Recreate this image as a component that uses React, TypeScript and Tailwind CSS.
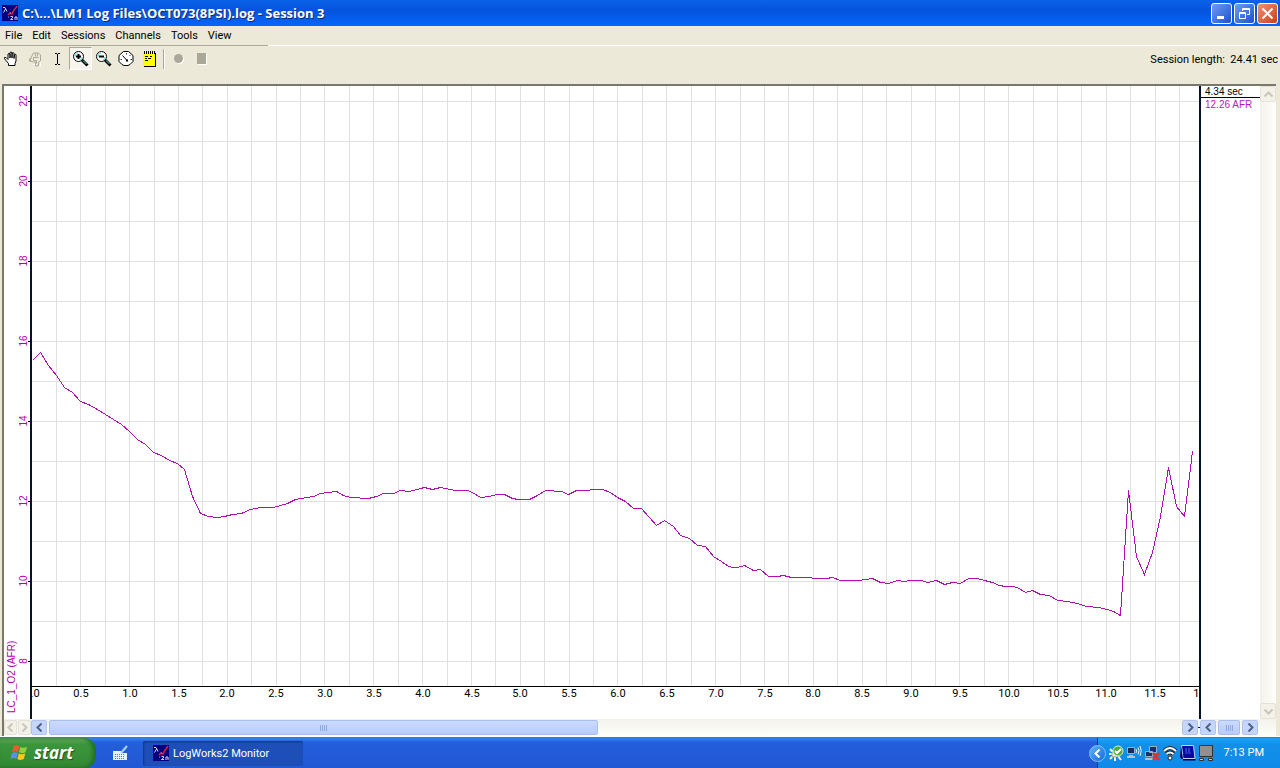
import type { ReactNode } from 'react'

const menus = ['File', 'Edit', 'Sessions', 'Channels', 'Tools', 'View']

const GRID_X = 24.42
const GRID_Y = 40

// x, y pairs of the AFR trace
const trace = [
    [32, 360], [40, 352], [48, 365], [56, 375], [64, 387], [72, 392], [80, 401], [88, 404], [97, 409], [105, 414],
    [113, 419], [121, 424], [129, 431], [137, 439], [145, 444], [153, 452], [161, 455], [169, 460], [177, 463], [184, 469],
    [192, 496], [200, 513], [208, 516], [217, 517], [224, 516], [232, 514], [241, 513], [250, 509], [260, 507], [273, 507],
    [287, 503], [295, 499], [300, 498], [313, 496], [320, 493], [336, 491], [343, 495], [350, 497], [368, 498], [376, 496],
    [383, 493], [393, 493], [400, 490], [409, 491], [424, 487], [432, 489], [440, 487], [455, 490], [467, 490], [472, 492],
    [480, 497], [489, 496], [496, 494], [504, 494], [512, 498], [518, 499], [529, 499], [537, 495], [545, 490], [561, 491],
    [568, 494], [576, 490], [587, 490], [592, 489], [602, 489], [610, 492], [617, 497], [625, 501], [633, 508], [641, 508],
    [649, 517], [656, 525], [664, 520], [673, 526], [680, 535], [689, 538], [697, 545], [705, 546], [713, 556], [721, 561],
    [728, 566], [733, 567], [737, 567], [744, 565], [753, 570], [760, 569], [768, 576], [777, 576], [783, 575], [791, 577],
    [810, 577], [813, 578], [826, 578], [832, 577], [840, 580], [858, 580], [872, 578], [880, 582], [888, 583], [897, 580],
    [904, 581], [910, 580], [921, 580], [927, 582], [936, 580], [944, 584], [952, 582], [960, 583], [968, 578], [977, 578],
    [984, 580], [992, 582], [999, 585], [1005, 586], [1012, 586], [1017, 587], [1025, 592], [1032, 590], [1040, 594], [1049, 595],
    [1057, 600], [1067, 601], [1077, 603], [1086, 606], [1098, 607], [1107, 609], [1113, 611], [1120, 615], [1128, 490], [1136, 556],
    [1144, 574], [1152, 552], [1160, 516], [1168, 467], [1176, 506], [1184, 516], [1192, 451],
]

const verticals = Array.from({ length: 48 }, (_, i) => Math.floor(31.9 + GRID_X * (i + 1)))
const horizontals = Array.from({ length: 15 }, (_, i) => 101 + GRID_Y * i)
const times = Array.from({ length: 25 }, (_, i) => ({ x: Math.round(32 + GRID_X * 2 * i), label: (i / 2).toFixed(1) }))
const ratios = [22, 20, 18, 16, 14, 12, 10, 8].map((v, i) => ({ v, y: 101 + 80 * i }))

function AppIcon() {
    return (
        <svg width="16" height="16" viewBox="0 0 16 16" fill="none" aria-hidden="true">
            <path fill="#000080" d="M0 0h16v16H0z" />
            <path stroke="#d8d8f0" d="M1 2.500h2l2 4M3.500 4 1.500 7.500M8.500 11.500h2v1.500l-2 1.500h2.500M13 15v-3h2v3" />
            <path stroke="#e8202a" strokeWidth="1.500" d="m6 10 2-2 2 1 2-4 1-1 2-3" />
            <path stroke="#7fb0e8" d="M6 12h1M8 8h1" />
        </svg>
    )
}

function Hand({ faded = false }: { faded?: boolean }) {
    return (
        <svg width="16" height="16" viewBox="0 0 16 16" fill={faded ? 'none' : '#fff'} stroke={faded ? '#aca899' : '#000'} aria-hidden="true">
            {faded ? (
                <>
                    <path stroke="#fff" d="M6.500 13.500h3M13.500 11v4h-3" />
                    <path d="M3.500 10.500V7.500l3-5.500h5l2 2v6l-2 1v4h-3v-4h-2l-4-1v-2l2-1M6.500 9.500v-3h5M8.500 2.500v3M10.500 2.500v3M6.500 9.500h3v3" />
                </>
            ) : (
                <path strokeLinejoin="round" d="M4.500 14.500v-2l-3-3.500-1-1.500v-1h1.500l2 2v-5.500l1-.5 1 .5v4-5.500l1-.5 1 .5V7l.2-5 1-.3.800.5V7.500l.5-4 1-.3.500.8v6l-1 2.500v2z" />
            )}
        </svg>
    )
}

function Magnifier({ plus = false }: { plus?: boolean }) {
    return (
        <svg width="17" height="17" viewBox="0 0 17 17" fill="none" aria-hidden="true">
            <circle cx="6.500" cy="6.500" r="5" fill="#fff" stroke="#000" />
            <path stroke="#4ee0e0" d="M3 7a4 4 0 0 1 3-4M10 7a4 4 0 0 1-2 3" />
            <path stroke="#000" strokeWidth="2" d={plus ? 'M4 6.500h5M6.500 4v5' : 'M4 6.500h5'} />
            <path stroke="#000" strokeWidth="3" d="m10 10 5.500 5.500" />
            <path stroke="#4ee0e0" d="m11 10.500 3.500 3.500" />
        </svg>
    )
}

function Gauge() {
    return (
        <svg width="17" height="16" viewBox="0 0 17 16" fill="none" stroke="#000" aria-hidden="true">
            <path fill="#fff" d="M5.500.5h5l4.500 4v6l-3 3-2 1h-4l-2-1-3-3v-6z" />
            <path d="M4.500 4.500 9 9.500" />
            <path strokeWidth=".8" d="M8.500 2v1.500M12.500 4l-1 1M14 8.500h-1.500M2.500 8.500H4" />
            <path fill="#000" stroke="none" d="M8 8.500h2v2H8z" />
        </svg>
    )
}

function Notepad() {
    return (
        <svg width="14" height="16" viewBox="0 0 14 16" aria-hidden="true">
            <path fill="#000" d="M1 2h12v14H1z" />
            <path fill="#ffff00" d="M0 2h12v13H0z" />
            <path fill="none" stroke="#000" strokeDasharray="1 1" strokeWidth="3" d="M1 1.500h11" />
            <path fill="none" stroke="#000" d="M2 5.500h3M7 5.500h2M2 7.500h2M5 7.500h3M2 9.500h3" />
        </svg>
    )
}

function ToolButton({ label, pressed = false, disabled = false, children }: { label: string; pressed?: boolean; disabled?: boolean; children: ReactNode }) {
    return (
        <button
            aria-label={label}
            aria-pressed={pressed}
            disabled={disabled}
            className={
                pressed
                    ? 'flex h-[23px] w-[23px] items-center justify-center border border-t-[#aca899] border-l-[#aca899] border-r-white border-b-white bg-[#f6f4ec]'
                    : 'flex h-[23px] w-[23px] items-center justify-center'
            }
        >
            {children}
        </button>
    )
}

function Chevron({ d }: { d: string }) {
    return (
        <svg width="9" height="9" viewBox="0 0 9 9" fill="none" stroke="currentColor" strokeWidth="2" aria-hidden="true">
            <path d={d} />
        </svg>
    )
}

const LEFT = 'M6.500 0.500l-4 4 4 4'
const RIGHT = 'M2.500 0.500l4 4-4 4'
const UP = 'M0.500 6.500l4-4 4 4'
const DOWN = 'M0.500 2.500l4 4 4-4'

function ScrollButton({ label, d, className }: { label: string; d: string; className: string }) {
    return (
        <button aria-label={label} className={`flex shrink-0 items-center justify-center rounded-xs border ${className}`}>
            <Chevron d={d} />
        </button>
    )
}

const blue = 'h-[15px] w-4 border-[#b0c4f0] bg-[#c6d5fd] text-[#4d6185]'
const dim = 'border-[#e4e2d6] bg-[#f3f1e8] text-[#c9c7ba]'

function Grip() {
    return (
        <span className="flex gap-px">
            <span className="h-[6px] w-px bg-[#8ea8e0]" />
            <span className="h-[6px] w-px bg-[#8ea8e0]" />
            <span className="h-[6px] w-px bg-[#8ea8e0]" />
            <span className="h-[6px] w-px bg-[#8ea8e0]" />
        </span>
    )
}

function TitleBar() {
    const frame = 'flex h-[21px] w-[21px] items-center justify-center rounded-[3px] border border-white'
    return (
        <header className="flex h-[26px] shrink-0 items-center bg-linear-to-b from-[#0a63e8] via-[#0553dd] via-40% to-[#0466fb] pr-[2px] pl-[2px]">
            <AppIcon />
            <h1 className="ml-1 flex-1 truncate font-['Open_Sans','Noto_Sans',sans-serif] text-[13px] leading-[20px] font-bold text-white [text-shadow:1px_1px_#0a2a80]">
                C:\...\LM1 Log Files\OCT073(8PSI).log - Session 3
            </h1>
            <div className="flex gap-[2px]">
                <button aria-label="Minimize" className={`${frame} bg-linear-to-br from-[#6f9cf5] to-[#1c4fd0]`}>
                    <svg width="13" height="13" fill="#fff" aria-hidden="true"><path d="M2 9h7v3H2z" /></svg>
                </button>
                <button aria-label="Restore" className={`${frame} bg-linear-to-br from-[#6f9cf5] to-[#1c4fd0]`}>
                    <svg width="13" height="13" fill="none" stroke="#fff" aria-hidden="true">
                        <path d="M4.500 4V1.500h7v6H9M4 2.500h8M1.500 5.500h6v6h-6zM1 6.500h7" />
                    </svg>
                </button>
                <button aria-label="Close" className={`${frame} bg-linear-to-br from-[#f09070] to-[#cc3a14]`}>
                    <svg width="13" height="13" stroke="#fff" strokeWidth="2" aria-hidden="true"><path d="m1.500 1.500 10 10M11.500 1.500l-10 10" /></svg>
                </button>
            </div>
        </header>
    )
}

function Toolbar() {
    return (
        <div className="flex h-[38px] shrink-0 items-start justify-between pt-px">
            <div className="flex items-center">
                <ToolButton label="Pan"><Hand /></ToolButton>
                <ToolButton label="Grab" disabled><Hand faded /></ToolButton>
                <ToolButton label="Select">
                    <svg width="7" height="12" fill="none" stroke="#000" aria-hidden="true"><path d="M1 .5h2M4 .5h2M3.500 1v10M1 11.500h2M4 11.500h2" /></svg>
                </ToolButton>
                <ToolButton label="Zoom in" pressed><Magnifier plus /></ToolButton>
                <ToolButton label="Zoom out"><Magnifier /></ToolButton>
                <ToolButton label="Gauges"><Gauge /></ToolButton>
                <ToolButton label="Notes"><Notepad /></ToolButton>
                <span className="mx-[2px] h-5 w-[2px] border-l border-l-[#aca899] bg-white" />
                <ToolButton label="Record" disabled>
                    <svg width="10" height="10" aria-hidden="true"><circle cx="5.500" cy="5.500" r="4.500" fill="#fff" /><circle cx="4.500" cy="4.500" r="4.500" fill="#aca899" /></svg>
                </ToolButton>
                <ToolButton label="Stop" disabled>
                    <svg width="10" height="12" aria-hidden="true"><path fill="#fff" d="M1 1h9v11H1z" /><path fill="#aca899" d="M0 0h9v11H0z" /></svg>
                </ToolButton>
            </div>
            <p className="pt-[5px] pr-[2px] font-[Roboto,sans-serif] text-[11px] leading-4 whitespace-pre">Session length:  24.41 sec</p>
        </div>
    )
}

function RatioAxis() {
    return (
        <svg className="h-full w-[26px] shrink-0 text-[10px]" fill="#b000b0" role="img" aria-label="LC_1_O2 (AFR) axis">
            <g transform="translate(-4 -86)">
                {ratios.map(({ v, y }) => (
                    <g key={v}>
                        <text textAnchor="middle" transform={`translate(27 ${y}) rotate(-90)`}>{v}</text>
                        <path fill="#000" d={`M28 ${y}h2v1h-2z`} />
                    </g>
                ))}
                <text transform="translate(15 713) rotate(-90)">LC_1_O2 (AFR)</text>
            </g>
        </svg>
    )
}

function Plot() {
    return (
        <svg className="h-full min-w-0 flex-1 overflow-hidden font-[Roboto,sans-serif] text-[11px]" role="img" aria-label="Air fuel ratio over time">
            <g transform="translate(-32 -86)">
                <g fill="#e0e0e0">
                    {verticals.map((x) => <rect key={x} x={x} y="86" width="1" height="600" />)}
                    {horizontals.map((y) => <rect key={y} x="32" y={y} width="100%" height="1" />)}
                </g>
                <rect x="32" y="686" width="100%" height="1" />
                {times.map(({ x, label }) => <text key={label} x={x} y="697" textAnchor="middle">{label}</text>)}
                <polyline
                    transform="translate(.5 .5)"
                    fill="none"
                    stroke="#b010b0"
                    shapeRendering="crispEdges"
                    points={trace.map((p) => p.join(',')).join(' ')}
                />
            </g>
        </svg>
    )
}

function Chart() {
    return (
        <main className="mr-1 ml-[2px] flex min-h-0 flex-1 flex-col border-t-2 border-l-2 border-[#7a776b] bg-white">
            <div className="flex min-h-0 flex-1">
                <RatioAxis />
                <div className="w-[2px] shrink-0 bg-[#04122c]" />
                <Plot />
                <div className="w-[2px] shrink-0 bg-[#04122c]" />
                <aside className="w-[59px] shrink-0 text-[10px] leading-[11px] whitespace-nowrap">
                    <p className="border-b border-black pl-1">4.34 sec</p>
                    <p className="pt-px pl-1 text-[#b818c0]">12.26 AFR</p>
                </aside>
                <div className="flex w-4 shrink-0 flex-col justify-between bg-linear-to-r from-[#f3f2ea] to-[#fefefb]">
                    <ScrollButton label="Scroll up" d={UP} className={`h-4 w-4 ${dim}`} />
                    <ScrollButton label="Scroll down" d={DOWN} className={`h-4 w-4 ${dim}`} />
                </div>
            </div>
            <div className="flex h-[17px] shrink-0 items-center bg-linear-to-b from-[#f3f2ea] to-[#fefefb]">
                <div className="flex w-[27px] shrink-0 gap-px">
                    <ScrollButton label="Axis left" d={LEFT} className={`h-[15px] w-[13px] ${dim}`} />
                    <ScrollButton label="Axis right" d={RIGHT} className={`h-[15px] w-[13px] ${dim}`} />
                </div>
                <div className="flex min-w-0 flex-1">
                    <ScrollButton label="Scroll left" d={LEFT} className={blue} />
                    <div className="min-w-0 flex-1 px-[2px]">
                        <div className="flex h-[15px] w-[48.500%] items-center justify-center rounded-xs border border-[#a8bdf0] bg-linear-to-b from-[#cbdafe] to-[#b9cbfb]">
                            <Grip />
                        </div>
                    </div>
                    <ScrollButton label="Scroll right" d={RIGHT} className={blue} />
                </div>
                <span className="h-px w-[2px] bg-[#04122c]" />
                <div className="flex w-[60px] shrink-0 justify-between pr-[2px]">
                    <ScrollButton label="Values left" d={LEFT} className={blue} />
                    <div className="flex h-[15px] w-[22px] items-center justify-center rounded-xs border border-[#a8bdf0] bg-linear-to-b from-[#cbdafe] to-[#b9cbfb]">
                        <Grip />
                    </div>
                    <ScrollButton label="Values right" d={RIGHT} className={blue} />
                </div>
                <div className="h-full w-4 shrink-0" />
            </div>
        </main>
    )
}

function Flag() {
    return (
        <svg width="19" height="18" viewBox="0 0 19 18" aria-hidden="true">
            <path fill="#ef5b2c" d="M3.500 2.500C5.500 1 7.500 1 9.300 2.300L8 8C6 7 4.200 7 2 8.200z" />
            <path fill="#8cd33c" d="M10.300 3c2 1 4.200 1 6.700-.3l-1.500 5.600c-2.300 1.200-4.500 1-6.500 0z" />
            <path fill="#5a8df5" d="M1.800 9.300c2-1.300 4-1.300 6-.3l-1.400 5.700c-2-1.200-4-1-6 .2z" />
            <path fill="#fcc91d" d="M8.800 9.400c2 1 4.200 1.100 6.500 0l-1.500 5.700c-2.300 1.100-4.300 1-6.400-.1z" />
        </svg>
    )
}

function Tray() {
    return (
        <div className="relative flex h-full items-center border-l border-[#0a3f9c] bg-linear-to-b from-[#1ea4f4] via-[#1290e8] via-20% to-[#0f8aea] pr-4 pl-[10px] text-white">
            <button aria-label="Show hidden icons" className="absolute top-[7px] -left-[9px] flex h-[17px] w-[17px] items-center justify-center rounded-full border border-[#7cc4fa] bg-linear-to-br from-[#5eb4f8] to-[#1668d8]">
                <Chevron d={LEFT} />
            </button>
            <div className="flex gap-[2px]">
                <svg width="16" height="16" aria-hidden="true">
                    <path stroke="#f4f4e8" strokeWidth="2" d="m2 4 3 3M1 9h4M2 14l3-3M7 12v4M10 11l3 4" />
                    <path fill="#e8e8d8" stroke="#555" strokeWidth=".5" d="M4 7h6v5H4z" />
                    <circle cx="10" cy="6" r="5" fill="#4cae36" stroke="#d8f0c8" />
                    <path fill="none" stroke="#fff" strokeWidth="2" d="m7 6 2 2 4-4" />
                </svg>
                <svg width="16" height="16" fill="none" aria-hidden="true">
                    <path fill="#1c2c50" stroke="#9ab0c8" d="M1.500 2.500h7v6h-7z" />
                    <path fill="#b8c0c8" d="M3 10h4v1h2v2H1v-2h2z" />
                    <path stroke="#e8f4ff" d="M10 4q1 2 0 4M12 2.500q2 3 0 7M14 1q2.500 4.500 0 10" />
                </svg>
                <svg width="16" height="16" aria-hidden="true">
                    <path fill="#1c2c70" stroke="#9ab0c8" d="M5.500 1.500h7v6h-7zM1.500 6.500h7v5h-7z" />
                    <path fill="#b8c0c8" d="M1 13h8v2H1z" />
                    <path stroke="#e83020" strokeWidth="2.500" d="m9 8 6 7M15 8l-6 7" />
                </svg>
                <svg width="16" height="16" fill="none" aria-hidden="true">
                    <path stroke="#222" strokeWidth="4" d="M2 6q6-6 12 0M4.500 9q3.500-3 7 0" />
                    <path stroke="#fff" strokeWidth="2" d="M2 6q6-6 12 0M4.500 9q3.500-3 7 0" />
                    <circle cx="8" cy="13" r="2" fill="#fff" stroke="#222" />
                </svg>
                <svg width="16" height="16" aria-hidden="true">
                    <path fill="#0808a0" stroke="#c8d0f8" d="M1.500 .5h12l1.500 13h-12z" />
                    <path fill="#000050" d="m1 1 2 13H1.500L0 12zM3 14h12.500v1.500H3z" />
                    <path stroke="#5070ff" strokeDasharray="2 1" d="M5 4h6M5 6h6M5.500 8h6" />
                </svg>
                <svg width="16" height="16" aria-hidden="true">
                    <path fill="#909090" stroke="#303030" d="M1.500 .5h13v11h-13z" />
                    <path fill="#c8c8b8" stroke="#303030" d="M1.500 13.500h4v2h-4zM10.500 13.500h4v2h-4z" />
                </svg>
            </div>
            <time className="ml-[10px] pt-px font-[Roboto,sans-serif] text-[11px] whitespace-nowrap">7:13 PM</time>
        </div>
    )
}

function Taskbar() {
    return (
        <footer className="flex h-[30px] shrink-0 items-center bg-linear-to-b from-[#3a80f0] via-[#245edb] via-15% to-[#2158d4]">
            <button className="flex h-full w-24 items-center rounded-r-xl bg-linear-to-b from-[#5fb45f] via-[#3c963c] via-20% to-[#338833] pl-[10px] shadow-[inset_-3px_0_4px_#1f6b25]">
                <Flag />
                <span className="ml-[5px] font-['Open_Sans','Noto_Sans',sans-serif] text-[17px] leading-6 font-bold text-white italic [text-shadow:1px_1px_1px_#205020]">start</span>
            </button>
            <button aria-label="Handwriting" className="ml-4">
                <svg width="16" height="16" fill="none" aria-hidden="true">
                    <path fill="#e8f0f8" d="M1 6h8l1 2h5v7H1z" />
                    <path stroke="#5080b0" d="M3 9.500h10M3 11.500h10M3 13.500h10" strokeDasharray="1 1" />
                    <path stroke="#a8d8ff" strokeWidth="2" d="m15 1-6 7" />
                </svg>
            </button>
            <button className="ml-[15px] flex h-[25px] w-40 items-center rounded-xs bg-[#1e4fb8] pl-[10px] text-white shadow-[inset_1px_1px_2px_#12367f]">
                <AppIcon />
                <span className="ml-1 pt-[2px] font-[Roboto,sans-serif] text-[11px]">LogWorks2 Monitor</span>
            </button>
            <div className="flex-1" />
            <Tray />
        </footer>
    )
}

export default function App() {
    return (
        <div className="flex h-screen flex-col overflow-hidden bg-[#ece9d8] font-['Liberation_Sans',Arial,sans-serif] text-black">
            <TitleBar />
            <nav className="flex h-5 shrink-0 items-center gap-[10px] border-b border-white pt-px pl-[5px] font-[Roboto,sans-serif] text-[11px]">
                {menus.map((name) => <button key={name}>{name}</button>)}
            </nav>
            <div className="-mt-px h-px w-[268px] shrink-0 bg-[#aca899]" />
            <Toolbar />
            <Chart />
            <div className="h-[2px] shrink-0 border-t border-white bg-[#716f64]" />
            <Taskbar />
        </div>
    )
}
